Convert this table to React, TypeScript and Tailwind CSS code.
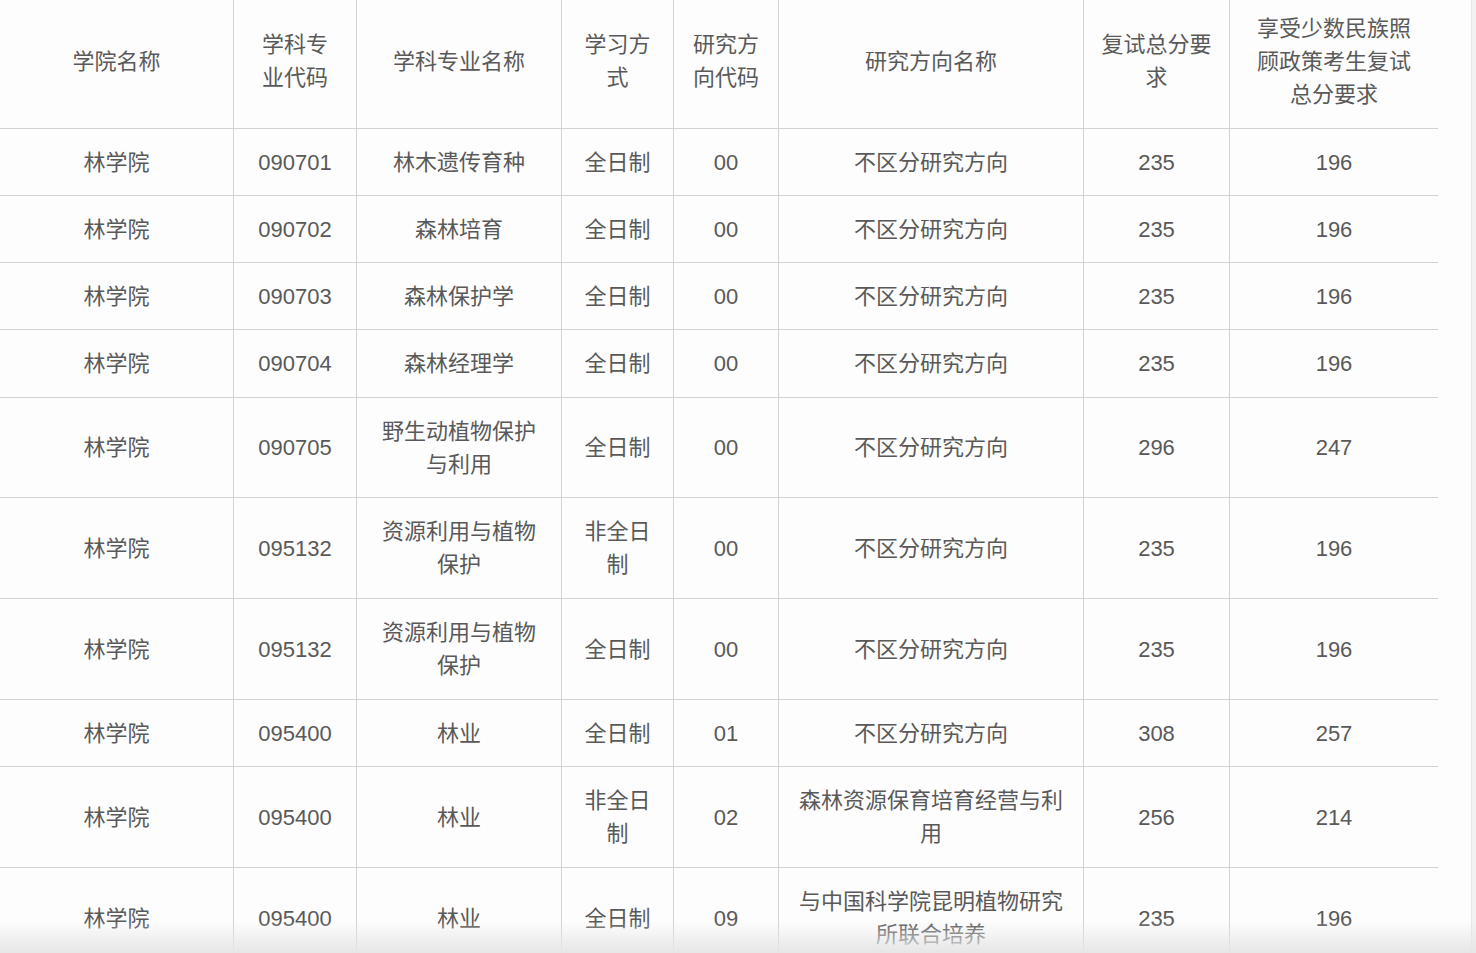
const cols = "grid grid-cols-[234px_123px_205px_112px_105px_305px_146px_208px]";

type Row = { h: string; cells: string[][] };

const header: string[][] = [
  ["学院名称"],
  ["学科专", "业代码"],
  ["学科专业名称"],
  ["学习方", "式"],
  ["研究方", "向代码"],
  ["研究方向名称"],
  ["复试总分要", "求"],
  ["享受少数民族照", "顾政策考生复试", "总分要求"],
];

const one = "h-[67px]";
const two = "h-[101px]";

const rows: Row[] = [
  { h: one, cells: [["林学院"], ["090701"], ["林木遗传育种"], ["全日制"], ["00"], ["不区分研究方向"], ["235"], ["196"]] },
  { h: one, cells: [["林学院"], ["090702"], ["森林培育"], ["全日制"], ["00"], ["不区分研究方向"], ["235"], ["196"]] },
  { h: one, cells: [["林学院"], ["090703"], ["森林保护学"], ["全日制"], ["00"], ["不区分研究方向"], ["235"], ["196"]] },
  { h: "h-[68px]", cells: [["林学院"], ["090704"], ["森林经理学"], ["全日制"], ["00"], ["不区分研究方向"], ["235"], ["196"]] },
  { h: "h-[100px]", cells: [["林学院"], ["090705"], ["野生动植物保护", "与利用"], ["全日制"], ["00"], ["不区分研究方向"], ["296"], ["247"]] },
  { h: two, cells: [["林学院"], ["095132"], ["资源利用与植物", "保护"], ["非全日", "制"], ["00"], ["不区分研究方向"], ["235"], ["196"]] },
  { h: two, cells: [["林学院"], ["095132"], ["资源利用与植物", "保护"], ["全日制"], ["00"], ["不区分研究方向"], ["235"], ["196"]] },
  { h: one, cells: [["林学院"], ["095400"], ["林业"], ["全日制"], ["01"], ["不区分研究方向"], ["308"], ["257"]] },
  { h: two, cells: [["林学院"], ["095400"], ["林业"], ["非全日", "制"], ["02"], ["森林资源保育培育经营与利", "用"], ["256"], ["214"]] },
  { h: two, cells: [["林学院"], ["095400"], ["林业"], ["全日制"], ["09"], ["与中国科学院昆明植物研究", "所联合培养"], ["235"], ["196"]] },
];

function Cell({ lines, last, head }: { lines: string[]; last: boolean; head?: boolean }) {
  return (
    <div
      className={`flex flex-col items-center justify-center text-center leading-[33px] ${
        head ? "pb-[6px]" : ""
      } ${last ? "" : "border-r border-[#d2d2d2]"}`}
    >
      {lines.map((l, i) => (
        <span key={i} className="whitespace-nowrap">
          {l}
        </span>
      ))}
    </div>
  );
}

export default function App() {
  return (
    <div
      className="relative h-[953px] w-[1476px] overflow-hidden bg-[#fdfdfd] text-[22px] text-[#595959] flex"
      style={{ fontFamily: '"Liberation Sans", "Noto Sans CJK SC", sans-serif' }}
    >
      <div className="w-[1438px] flex flex-col">
        <div className={`${cols} h-[129px] shrink-0 border-b border-[#d2d2d2]`}>
          {header.map((c, i) => (
            <Cell key={i} lines={c} last={i === header.length - 1} head />
          ))}
        </div>
        {rows.map((r, ri) => (
          <div key={ri} className={`${cols} ${r.h} shrink-0 border-b border-[#d2d2d2]`}>
            {r.cells.map((c, i) => (
              <Cell key={i} lines={c} last={i === r.cells.length - 1} />
            ))}
          </div>
        ))}
      </div>
      <div className="flex-1" />
      <div className="w-[5px] bg-[#f2f2f2] border-l border-[#e6e6e6]" />
      <div className="pointer-events-none absolute inset-x-0 bottom-0 h-[32px] bg-gradient-to-b from-transparent to-[#e6e6e6]" />
    </div>
  );
}
